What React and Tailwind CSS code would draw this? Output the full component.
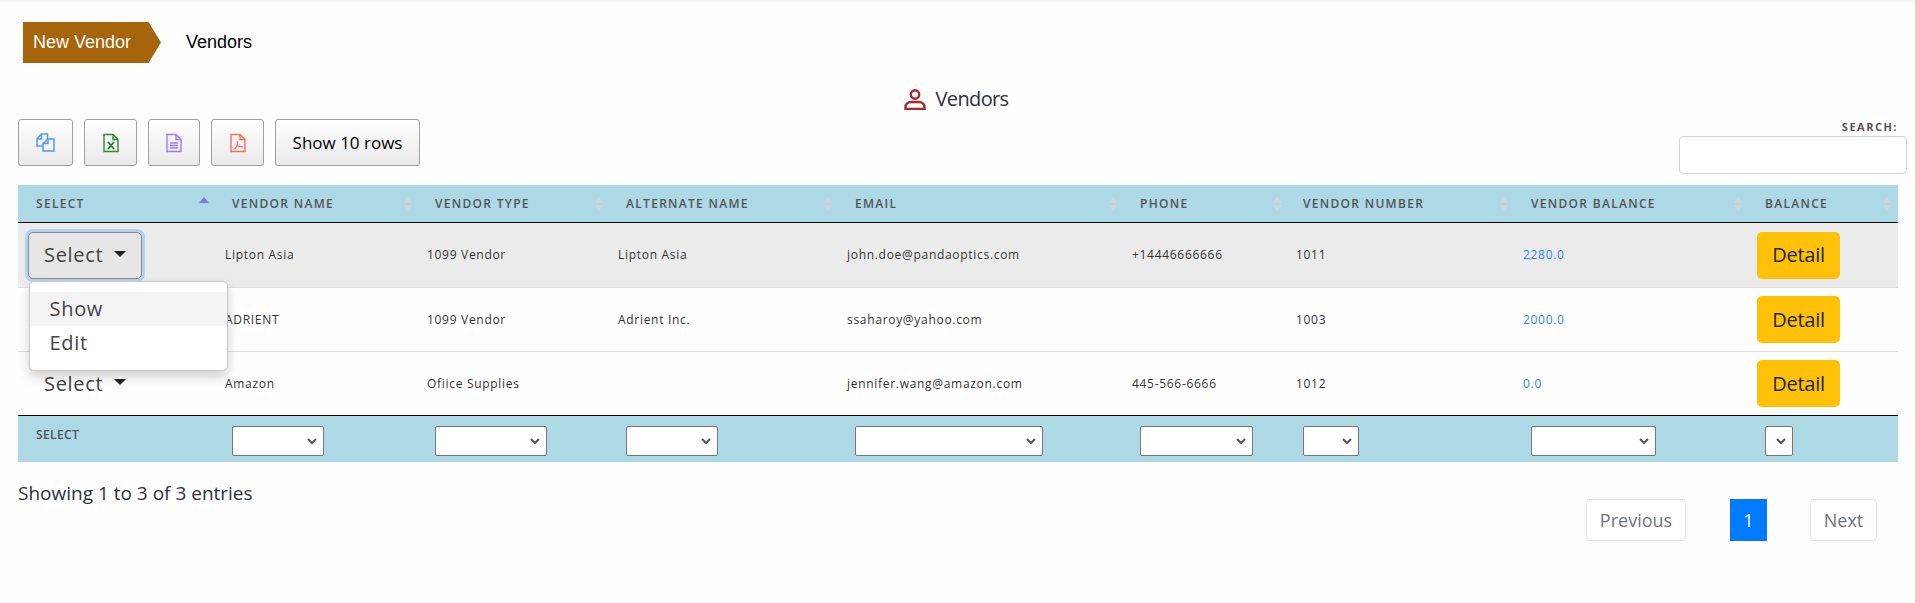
import React from 'react';

const columns = [
  { label: 'SELECT', col: 'w-[199px]' },
  { label: 'VENDOR NAME', col: 'w-[202px]', filter: 'w-[92px]', cell: 'pl-[15px]' },
  { label: 'VENDOR TYPE', col: 'w-[191px]', filter: 'w-[112px]', cell: 'pl-[16px]' },
  { label: 'ALTERNATE NAME', col: 'w-[229px]', filter: 'w-[92px]', cell: 'pl-[16px]' },
  { label: 'EMAIL', col: 'w-[285px]', filter: 'w-[188px]', cell: 'pl-[16px]' },
  { label: 'PHONE', col: 'w-[164px]', filter: 'w-[113px]', cell: 'pl-[16px]' },
  { label: 'VENDOR NUMBER', col: 'w-[227px]', filter: 'w-[56px]', cell: 'pl-[15px]' },
  { label: 'VENDOR BALANCE', col: 'w-[234px]', filter: 'w-[125px]', cell: 'pl-[16px]' },
  { label: 'BALANCE', col: 'w-[149px]', filter: 'w-[28px]', cell: 'pl-[16px]' },
];

const rows = [
  { name: 'Lipton Asia', type: '1099 Vendor', alt: 'Lipton Asia', email: 'john.doe@pandaoptics.com', phone: '+14446666666', number: '1011', balance: '2280.0' },
  { name: 'ADRIENT', type: '1099 Vendor', alt: 'Adrient Inc.', email: 'ssaharoy@yahoo.com', phone: '', number: '1003', balance: '2000.0' },
  { name: 'Amazon', type: 'Ofiice Supplies', alt: '', email: 'jennifer.wang@amazon.com', phone: '445-566-6666', number: '1012', balance: '0.0' },
];

function SortArrows({ active }) {
  return (
    <svg width="10" height="14" viewBox="0 0 10 14" className="shrink-0">
      <path d="M5 0 L10 6 L0 6 Z" fill={active ? '#7b7bdd' : '#ccd5d8'} />
      {!active && <path d="M5 14 L10 8 L0 8 Z" fill="#ccd5d8" />}
    </svg>
  );
}

function SelectToggle({ open }) {
  return (
    <button className={`flex items-center w-[114px] h-[47px] pl-[15px] rounded-[5px] text-[20px] tracking-[0.7px] text-[#444] border ${open ? 'bg-[#e6e6e6] border-[#8c8c8c] ring-[3px] ring-[#b3d1f3]' : 'border-transparent'}`}>
      Select
      <span className="ml-[11px] mb-[3px] border-x-[6px] border-x-transparent border-t-[6px] border-t-[#222]" />
    </button>
  );
}

function FileIcon({ color, children }) {
  return (
    <svg width="18" height="20" viewBox="0 0 18 20" fill="none" stroke={color} strokeWidth="1.4">
      <path d="M2 1.5 H11 L16 6.5 V18.5 H2 Z" />
      <path d="M11 1.5 V6.5 H16" />
      {children}
    </svg>
  );
}

function ToolButton({ className, children }) {
  return (
    <button className={`flex items-center justify-center h-[47px] rounded-[3px] border border-[#a0a0a0] bg-gradient-to-b from-white to-[#e9e9e9] text-[17px] text-black ${className}`}>
      {children}
    </button>
  );
}

function FilterSelect({ className }) {
  return (
    <div className={`relative mt-[10px] h-[30px] ${className}`}>
      <select className="block w-full h-full appearance-none bg-white rounded-[2px] border border-[#767676]" />
      <svg width="10" height="7" viewBox="0 0 10 7" fill="none" stroke="#555" strokeWidth="2" className="absolute right-[7px] top-[12px] pointer-events-none">
        <path d="M1 1 L5 5 L9 1" />
      </svg>
    </div>
  );
}

export default function App() {
  return (
    <div className="min-h-[603px] bg-[#fefefe] font-['Open_Sans',sans-serif] overflow-hidden">
      <div className="h-[2px] bg-[#f6f6f6]" />

      {/* Breadcrumb */}
      <div className="flex items-center pt-[20px] pl-[23px] font-['Liberation_Sans',sans-serif] text-[18px]">
        <div className="flex items-center h-[41px] w-[138px] pl-[10px] bg-[#a6640c] text-white [clip-path:polygon(0_0,91%_0,100%_50%,91%_100%,0_100%)]">
          New Vendor
        </div>
        <div className="ml-[25px] text-black">Vendors</div>
      </div>

      {/* Title */}
      <div className="flex items-center justify-center mt-[23px] h-[26px] pr-[3px] text-[20px] tracking-[-0.65px] text-[#2c3140]">
        <svg width="22" height="21" viewBox="0 0 22 21" fill="none" stroke="#a52a2a" strokeWidth="2.4" className="mr-[10px]">
          <circle cx="11" cy="5.5" r="4.2" />
          <path d="M1.5 20 V18 C1.5 15 4 13 7 13 H15 C18 13 20.5 15 20.5 18 V20 Z" />
        </svg>
        Vendors
      </div>

      {/* Toolbar */}
      <div className="flex justify-between items-start mt-[7px] pl-[18px] pr-[8px]">
        <div className="flex gap-[11px]">
          <ToolButton className="w-[55px]">
            <svg width="19" height="19" viewBox="0 0 19 19" fill="none" stroke="#4d9aff" strokeWidth="1.5">
              <path d="M6.5 13 H1 V6 L5.5 1 H11.5 V6" />
              <path d="M1 6 H5.5 V1" />
              <path d="M8 10 L12 6 H18 V18 H7 V10 Z" fill="#f3f7fd" />
              <path d="M7 10.5 H12 V6" />
            </svg>
          </ToolButton>
          <ToolButton className="w-[53px]">
            <FileIcon color="#2e8b2e">
              <path d="M6 9 L12 16 M12 9 L6 16" stroke="#1d7a2a" strokeWidth="1.8" />
            </FileIcon>
          </ToolButton>
          <ToolButton className="w-[52px]">
            <FileIcon color="#9a7bff">
              <path d="M5 10 H13 M5 12.5 H13 M5 15 H13" />
            </FileIcon>
          </ToolButton>
          <ToolButton className="w-[53px]">
            <FileIcon color="#ff6b5e">
              <path d="M8.5 8 C9 12 7 15 4.5 16.5 M8 12.5 C10 13.5 12 14 14 13.5" strokeWidth="1.2" />
            </FileIcon>
          </ToolButton>
          <ToolButton className="w-[145px]">Show 10 rows</ToolButton>
        </div>
        <div className="flex flex-col items-end w-[228px] -mt-[1px]">
          <label className="pr-[9px] h-[18px] text-[11px] leading-[18px] font-bold tracking-[1.5px] text-[#555]">SEARCH:</label>
          <input className="w-full h-[38px] bg-white rounded-[4px] border border-[#ced4da]" />
        </div>
      </div>

      {/* Vendors table */}
      <div className="pl-[18px] mt-[11px]">
        <table className="table-fixed w-[1880px] border-separate border-spacing-0 text-[12px] tracking-[0.7px] text-[#333]">
          <colgroup>
            {columns.map((c) => (
              <col key={c.label} className={c.col} />
            ))}
          </colgroup>
          <thead>
            <tr className="bg-[#add8e6]">
              {columns.map((c, i) => (
                <th key={c.label} className="h-[38px] p-0 border-b border-black">
                  <div className={`flex items-center justify-between text-[12px] font-semibold tracking-[1.3px] text-[#555] ${i === 0 ? 'pl-[18px] pr-[8px]' : `${c.cell} pr-[6px]`}`}>
                    <span>{c.label}</span>
                    <SortArrows active={i === 0} />
                  </div>
                </th>
              ))}
            </tr>
          </thead>
          <tbody>
            {rows.map((r, i) => (
              <tr key={r.email} className={i === 0 ? 'bg-[#ebebeb]' : ''}>
                <td className={`p-0 pl-[10px] ${i === 2 ? 'h-[63px]' : i === 0 ? 'h-[65px] border-b border-[#dddddd]' : 'h-[64px] border-b border-[#dddddd]'}`}>
                  {/* the open menu of the first row covers the toggle of the second */}
                  {i !== 1 && (
                    <div className="relative">
                      <SelectToggle open={i === 0} />
                      {i === 0 && (
                        <div className="absolute z-10 left-[0.5px] top-[49px] w-[199px] h-[90px] py-[10px] bg-white rounded-[5px] border border-[#c8c8c8] shadow-[0_6px_12px_rgba(0,0,0,0.18)] text-[20px] tracking-[0.7px] text-[#444]">
                          <div className="h-[34px] pl-[20px] leading-[34px] bg-[#f4f4f4]">Show</div>
                          <div className="h-[34px] pl-[20px] leading-[34px]">Edit</div>
                        </div>
                      )}
                    </div>
                  )}
                </td>
                {[r.name, r.type, r.alt, r.email, r.phone, r.number].map((v, j) => (
                  <td key={j} className={`p-0 pl-[8px] ${i === 2 ? '' : 'border-b border-[#dddddd]'}`}>{v}</td>
                ))}
                <td className={`p-0 pl-[8px] text-[#2f80ff] ${i === 2 ? '' : 'border-b border-[#dddddd]'}`}>{r.balance}</td>
                <td className={`p-0 pl-[8px] ${i === 2 ? '' : 'border-b border-[#dddddd]'}`}>
                  <button className="w-[83px] h-[47px] rounded-[5px] bg-[#ffc107] text-[20px] tracking-[-0.3px] text-[#212529]">Detail</button>
                </td>
              </tr>
            ))}
          </tbody>
          <tfoot>
            <tr className="bg-[#add8e6]">
              {columns.map((c, i) => (
                <td key={c.label} className={`h-[47px] p-0 align-top border-t border-black ${i === 0 ? 'pl-[18px]' : c.cell}`}>
                  {i === 0 ? (
                    <div className="pt-[10px] text-[12px] font-semibold tracking-[0.4px] text-[#555]">SELECT</div>
                  ) : (
                    <FilterSelect className={c.filter} />
                  )}
                </td>
              ))}
            </tr>
          </tfoot>
        </table>
      </div>

      {/* Footer */}
      <div className="flex justify-between items-start pl-[18px] pr-[38px]">
        <div className="mt-[19px] text-[19px] leading-[24px] text-[#2c3140]">Showing 1 to 3 of 3 entries</div>
        <div className="flex mt-[37px] text-[18px] text-[#6c757d]">
          <a className="flex items-center justify-center w-[100px] h-[42px] border border-[#dee2e6] rounded-[4px] bg-white">Previous</a>
          <a className="flex items-center justify-center w-[37px] h-[42px] ml-[44px] bg-[#007bff] text-white">1</a>
          <a className="flex items-center justify-center w-[67px] h-[42px] ml-[43px] border border-[#dee2e6] rounded-[4px] bg-white">Next</a>
        </div>
      </div>
    </div>
  );
}
